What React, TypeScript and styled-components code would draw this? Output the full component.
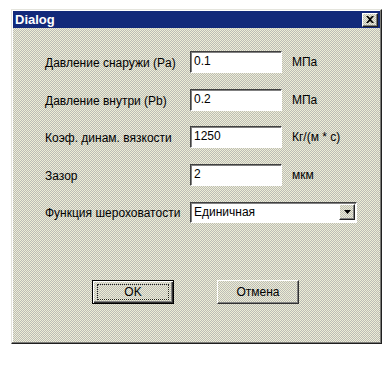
import React from "react";
import styled, { createGlobalStyle } from "styled-components";

const GlobalStyle = createGlobalStyle`
  html, body {
    margin: 0;
    padding: 0;
    background: #ffffff;
  }
  * {
    box-sizing: border-box;
  }
`;

const dither = `
  background-color: #d4d4c6;
  background-image: repeating-conic-gradient(#bcbcb6 0 25%, #eeeed6 0 50%);
  background-size: 2px 2px;
`;

const rows = [
  { label: "Давление снаружи (Pa)", value: "0.1", unit: "МПа" },
  { label: "Давление внутри (Pb)", value: "0.2", unit: "МПа" },
  { label: "Коэф. динам. вязкости", value: "1250", unit: "Кг/(м * с)" },
  { label: "Зазор", value: "2", unit: "мкм" },
];

const App: React.FC = () => {
  return (
    <>
      <GlobalStyle />
      <Window>
        <TitleBar>
          <span>Dialog</span>
          <CloseButton>
            <svg width="8" height="7" viewBox="0 0 8 7">
              <path d="M0 0h2l2 2 2-2h2L5 3.5 8 7H6L4 5 2 7H0l3-3.5z" fill="#000" />
            </svg>
          </CloseButton>
        </TitleBar>
        <Body>
          <Form>
            {rows.map((r) => (
              <React.Fragment key={r.label}>
                <Label>{r.label}</Label>
                <Field>{r.value}</Field>
                <Unit>{r.unit}</Unit>
              </React.Fragment>
            ))}
            <Label>Функция шероховатости</Label>
            <Select>
              <span>Единичная</span>
              <DropButton>
                <svg width="7" height="4" viewBox="0 0 7 4">
                  <path d="M0 0h7L3.5 4z" fill="#000" />
                </svg>
              </DropButton>
            </Select>
          </Form>
          <Buttons>
            <Button $default>
              <Focus>OK</Focus>
            </Button>
            <Button>Отмена</Button>
          </Buttons>
        </Body>
      </Window>
    </>
  );
};

export default App;

const Window = styled.div`
  margin: 9px 0 0 11px;
  width: 371px;
  height: 335px;
  padding: 1px;
  border: 1px solid;
  border-color: #e4e4dc #202020 #202020 #e4e4dc;
  box-shadow: inset -1px -1px #7a7a76, inset 1px 1px #ffffff;
  ${dither}
  display: flex;
  flex-direction: column;
  font-family: "Liberation Sans", Arial, sans-serif;
  font-size: 12px;
  color: #000;
`;

const TitleBar = styled.div`
  height: 17px;
  background: #12297a;
  color: #fff;
  font-weight: bold;
  font-size: 13px;
  display: flex;
  align-items: center;
  justify-content: space-between;
  padding: 0 2px 0 2px;
`;

const CloseButton = styled.div`
  width: 16px;
  height: 14px;
  ${dither}
  border: 1px solid;
  border-color: #ffffff #202020 #202020 #ffffff;
  box-shadow: inset -1px -1px #808080;
  display: flex;
  align-items: center;
  justify-content: center;
`;

const Body = styled.div`
  padding: 23px 0 0 32px;
  display: flex;
  flex-direction: column;
`;

const Form = styled.div`
  display: grid;
  grid-template-columns: 145px 92px auto;
  grid-auto-rows: 22px;
  row-gap: 15.5px;
  align-items: center;
`;

const Label = styled.div`
  white-space: nowrap;
  padding-top: 2px;
`;

const sunken = `
  background: #ffffff;
  border: 1px solid;
  border-color: #404040 #ffffff #ffffff #404040;
  box-shadow: inset 1px 1px #808080;
`;

const Field = styled.div`
  ${sunken}
  height: 22px;
  padding: 2px 0 0 3px;
`;

const Unit = styled.div`
  padding-left: 10px;
`;

const Select = styled.div`
  ${sunken}
  grid-column: 2 / 4;
  width: 167px;
  height: 21px;
  display: flex;
  align-items: center;
  justify-content: space-between;
  padding: 0 1px 0 3px;
`;

const DropButton = styled.div`
  width: 16px;
  height: 16px;
  ${dither}
  border: 1px solid;
  border-color: #ffffff #202020 #202020 #ffffff;
  box-shadow: inset -1px -1px #808080;
  display: flex;
  align-items: center;
  justify-content: center;
`;

const Buttons = styled.div`
  display: flex;
  gap: 43px;
  margin-top: 57px;
  padding-left: 47px;
`;

const Button = styled.div<{ $default?: boolean }>`
  width: 82px;
  height: 24px;
  ${dither}
  display: flex;
  align-items: center;
  justify-content: center;
  font-size: 12px;
  border: 1px solid;
  border-color: ${(p) => (p.$default ? "#000 #000 #000 #000" : "#ffffff #303030 #303030 #ffffff")};
  box-shadow: ${(p) =>
    p.$default
      ? "inset 1px 1px #ffffff, inset -1px -1px #303030, inset -2px -2px #808080"
      : "inset -1px -1px #808080"};
`;

const Focus = styled.div`
  width: 72px;
  height: 16px;
  border: 1px dotted #202020;
  display: flex;
  align-items: center;
  justify-content: center;
`;
